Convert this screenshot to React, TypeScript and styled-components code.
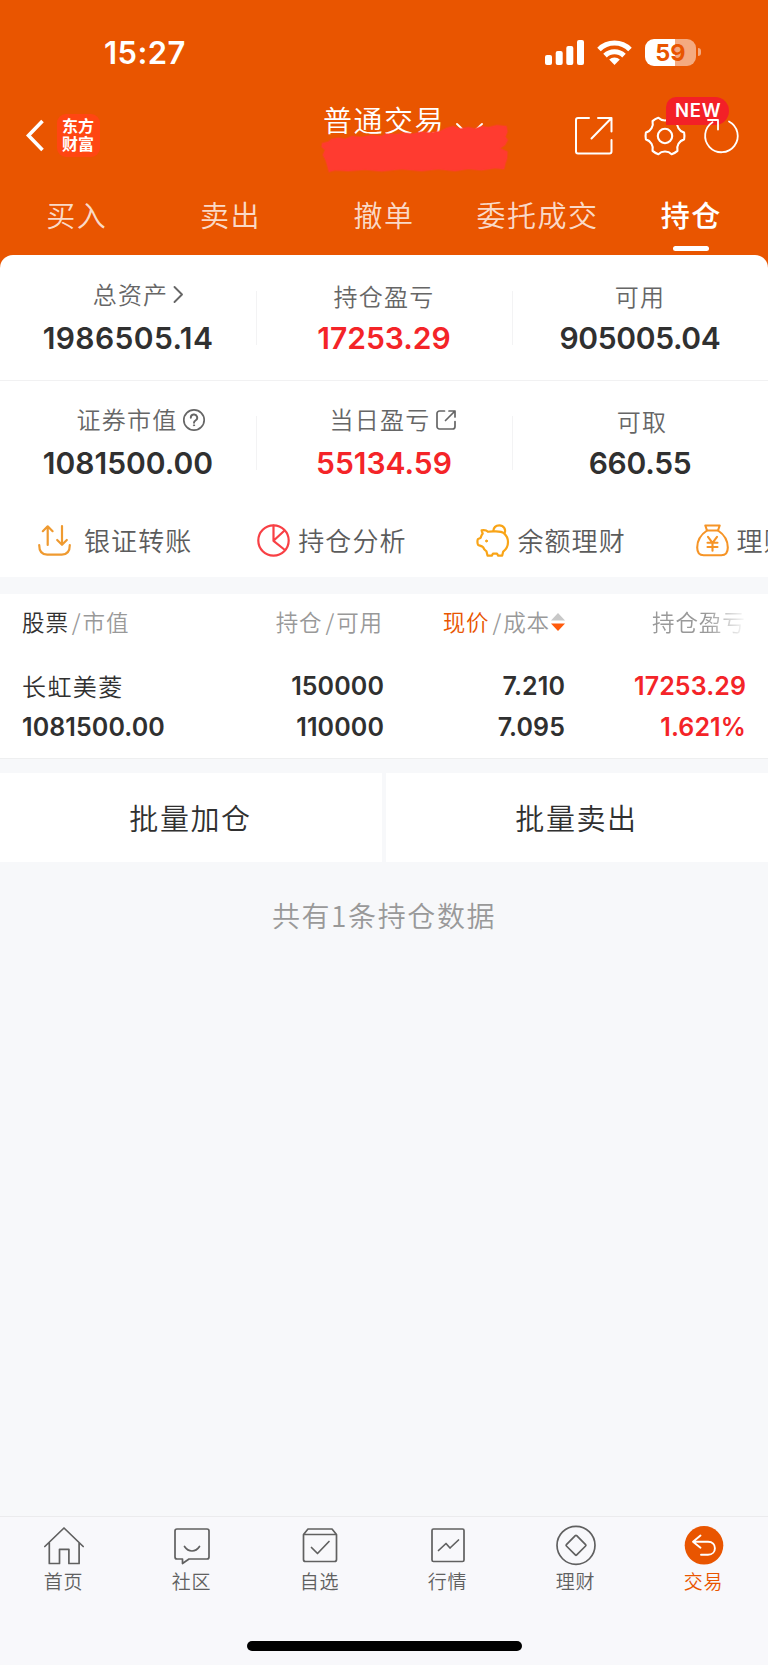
import React from "react";
import styled, { createGlobalStyle } from "styled-components";

const ORANGE = "#e95500";
const RED = "#f42428";
const INK = "#303030";
const GRAY = "#666666";
const MUTED = "#999999";
const BG = "#f7f8fa";
const CJK = `"Noto Sans CJK SC", sans-serif`;
const NUM = `Inter, "Noto Sans CJK SC", sans-serif`;

const GlobalStyle = createGlobalStyle`
  *, *::before, *::after { box-sizing: border-box; }
  body { margin: 0; background: ${BG}; font-family: ${CJK}; font-weight: 350; }
  svg { display: block; flex: none; overflow: visible; }
`;

const Screen = styled.div`
  display: flex;
  flex-direction: column;
  width: 768px;
  height: 1665px;
  overflow: hidden;
  background: ${BG};
`;

const Header = styled.header`
  flex: none;
  height: 268px;
  background: ${ORANGE};
  color: #fff;
`;

const StatusBar = styled.div`
  display: flex;
  align-items: center;
  justify-content: space-between;
  height: 96px;
  padding: 8px 67px 0 104px;
`;

const Clock = styled.span`
  font: 600 31px/32px ${NUM};
  letter-spacing: 0.4px;
  padding-top: 1px;
`;

const StatusIcons = styled.div`
  display: flex;
  align-items: center;
  gap: 13px;
`;

const Battery = styled.div`
  display: flex;
  align-items: center;
  gap: 2px;
`;

const BatteryBody = styled.div`
  display: flex;
  align-items: center;
  justify-content: center;
  width: 51px;
  height: 27px;
  border-radius: 9px;
  background: linear-gradient(90deg, #fff 59%, rgba(255, 255, 255, 0.5) 59%);
  color: ${ORANGE};
  font: 700 23.5px/27px ${NUM};
`;

const BatteryTip = styled.div`
  width: 3px;
  height: 8px;
  border-radius: 0 3px 3px 0;
  background: rgba(255, 255, 255, 0.5);
`;

const NavBar = styled.div`
  display: grid;
  grid-template-columns: 323px 190px 1fr;
  height: 80px;
`;

const NavLeft = styled.div`
  display: flex;
  align-items: center;
  gap: 14px;
  padding: 0 0 2px 25px;
`;

const AppLogo = styled.div`
  display: flex;
  flex-direction: column;
  align-items: center;
  justify-content: center;
  width: 43px;
  height: 43px;
  padding: 0 1px 2px 0;
  border-radius: 9px;
  background: #ff4612;
  font: 700 16px/18px ${CJK};
`;

const NavTitle = styled.div`
  position: relative;
  display: flex;
  align-items: flex-start;
  gap: 11px;
  padding-top: 5px;
`;

const TitleText = styled.span`
  font-size: 29px;
  line-height: 36px;
  letter-spacing: 1.5px;
`;

const TitleChevron = styled.svg`
  margin-top: 22px;
`;

const Scribble = styled.svg`
  position: absolute;
  left: -8px;
  top: -1px;
`;

const NavActions = styled.div`
  position: relative;
  display: flex;
  align-items: center;
  padding: 0 0 1px 61px;
`;

const GearWrap = styled.div`
  margin: 0 17px 0 32px;
`;

const Refresh = styled.svg`
  position: relative;
  z-index: 1;
`;

const NewBadge = styled.span`
  position: absolute;
  left: 153px;
  top: 1px;
  width: 63px;
  height: 28px;
  padding-left: 9px;
  border-radius: 10px 14px 14px 0;
  background: #f32027;
  font: 600 18.5px/27px ${NUM};
  letter-spacing: 0.7px;
`;

const Tabs = styled.nav`
  display: grid;
  grid-template-columns: repeat(5, 1fr);
  height: 79px;
`;

const Tab = styled.div<{ $active?: boolean }>`
  display: flex;
  flex-direction: column;
  align-items: center;
  padding-top: 17px;
  font-size: 29px;
  line-height: 42px;
  letter-spacing: 1.5px;
  font-weight: ${(p) => (p.$active ? 500 : 350)};
  color: ${(p) => (p.$active ? "#fff" : "rgba(255,255,255,0.8)")};

  &::after {
    content: "";
    width: 36px;
    height: 5px;
    margin-top: 11px;
    border-radius: 3px;
    background: ${(p) => (p.$active ? "#fff" : "transparent")};
  }
`;

const Summary = styled.section`
  flex: none;
  height: 322px;
  margin-top: -13px;
  border-radius: 13px 13px 0 0;
  background: #fff;
`;

const SummaryRow = styled.div`
  display: grid;
  grid-template-columns: repeat(3, 1fr);
  height: 125px;
  padding-top: 25px;

  & + & {
    padding-top: 24px;
    border-top: 1px solid #f1f1f2;
  }
`;

const Metric = styled.div`
  position: relative;
  display: flex;
  flex-direction: column;
  align-items: center;

  & + &::before {
    content: "";
    position: absolute;
    left: 0;
    top: 11px;
    width: 1px;
    height: 54px;
    background: #f3f3f4;
  }
`;

const MetricLabel = styled.div<{ $raised?: boolean; $indent?: number }>`
  display: flex;
  align-items: center;
  gap: 6px;
  height: 32px;
  margin-top: ${(p) => (p.$raised ? "-2px" : "0")};
  margin-bottom: ${(p) => (p.$raised ? "2px" : "0")};
  padding-left: ${(p) => p.$indent ?? 0}px;
  font-size: 24px;
  line-height: 32px;
  letter-spacing: 1.2px;
  color: ${GRAY};

  & > svg {
    margin-top: 1px;
  }
`;

const MetricValue = styled.div<{ $up?: boolean; $track?: number }>`
  margin-top: 8px;
  font: 600 30px/36px ${NUM};
  letter-spacing: ${(p) => p.$track ?? 0}px;
  color: ${(p) => (p.$up ? RED : INK)};
`;

const Tools = styled.div`
  display: flex;
  height: 72px;
  padding: 0 0 2px 38px;
  overflow: hidden;
`;

const Tool = styled.div<{ $gap?: number }>`
  display: flex;
  flex: none;
  align-items: center;
  width: 219.2px;
  font-size: 26px;
  line-height: 34px;
  letter-spacing: 1.1px;
  color: #5c5c5c;
  white-space: nowrap;

  & > span {
    padding-left: ${(p) => p.$gap ?? 8}px;
  }
`;

const Holdings = styled.section`
  flex: none;
  height: 165px;
  margin-top: 17px;
  padding: 0 22px;
  border-bottom: 1px solid #eeeff0;
  background: #fff;
`;

const HoldingsHead = styled.div`
  display: grid;
  grid-template-columns: 180px 181px 182px 181px;
  height: 60px;
  padding-bottom: 6px;
  font-size: 22.5px;
  letter-spacing: 0.9px;
  color: ${MUTED};
`;

const HeadCell = styled.div<{ $end?: boolean; $fade?: boolean }>`
  display: flex;
  align-items: center;
  justify-content: ${(p) => (p.$end ? "flex-end" : "flex-start")};
  white-space: nowrap;
  ${(p) =>
    p.$fade &&
    `padding-left: 87px;
     overflow: hidden;
     -webkit-mask-image: linear-gradient(90deg, #000 78%, rgba(0,0,0,0.12) 98%);
     mask-image: linear-gradient(90deg, #000 78%, rgba(0,0,0,0.12) 98%);`}
`;

const HeadStrong = styled.span<{ $accent?: boolean }>`
  color: ${(p) => (p.$accent ? ORANGE : INK)};
`;

const Slash = styled.span`
  margin: 0 1px 0 3px;
`;

const SortIcon = styled.svg`
  margin: 2px 0 0 1px;
`;

const HoldingRow = styled.div`
  display: grid;
  grid-template-columns: 180px 182px 181px 181px;
`;

const HoldingCell = styled.div<{ $end?: boolean; $up?: boolean }>`
  display: flex;
  flex-direction: column;
  align-items: ${(p) => (p.$end ? "flex-end" : "flex-start")};
  padding-top: 12px;
  font: 600 25px/41px ${NUM};
  letter-spacing: 0.1px;
  color: ${(p) => (p.$up ? RED : INK)};
`;

const StockName = styled.span`
  height: 41px;
  font: 350 24px/39px ${CJK};
  letter-spacing: 1.4px;
`;

const BatchBar = styled.div`
  display: grid;
  flex: none;
  grid-template-columns: 382px 1fr;
  gap: 4px;
  height: 89px;
  margin-top: 14px;
`;

const BatchButton = styled.button`
  padding: 0 1px 2px 0;
  border: 0;
  background: #fff;
  color: ${INK};
  font: 350 29px/42px ${CJK};
  letter-spacing: 1.6px;
`;

const CountNote = styled.p`
  flex: 1;
  margin: 0;
  padding-top: 32px;
  text-align: center;
  font-size: 28px;
  line-height: 42px;
  letter-spacing: 1.6px;
  color: ${MUTED};
`;

const BottomNav = styled.nav`
  display: grid;
  flex: none;
  grid-template-columns: repeat(6, 1fr);
  height: 125px;
  border-top: 1px solid #ebebed;
  background: #f8f8fb;
`;

const NavItem = styled.div<{ $active?: boolean }>`
  display: flex;
  flex-direction: column;
  align-items: center;
  gap: 2px;
  padding-top: 8px;
  font-size: 19px;
  line-height: 28px;
  letter-spacing: 0.8px;
  color: ${(p) => (p.$active ? ORANGE : "#606060")};

  & > span {
    padding-right: 1px;
  }
`;

const HomeIndicator = styled.div`
  flex: none;
  align-self: stretch;
  height: 24px;
  background: #f8f8fb;

  &::after {
    content: "";
    display: block;
    width: 275px;
    height: 10px;
    margin: 0 auto;
    border-radius: 5px;
    background: #000;
  }
`;

const gearPath = (() => {
  const at = (deg: number, r: number) => {
    const a = (deg * Math.PI) / 180;
    return `${(20 + r * Math.cos(a)).toFixed(2)} ${(20 + r * Math.sin(a)).toFixed(2)}`;
  };
  let d = `M${at(-10, 19.4)}`;
  for (let k = 0; k < 360; k += 60) {
    d += `Q${at(k, 19.8)} ${at(k + 10, 19.4)}C${at(k + 18, 15)} ${at(k + 42, 15)} ${at(k + 50, 19.4)}`;
  }
  return `${d}Z`;
})();

const scribblePath =
  "M22 145L40 140 50 132 70 128 90 132 110 124 140 126 170 121 200 123 215 116 240 118 270 114 295 116 320 110 345 113 375 109 395 99 415 94 435 101 460 97 480 101 500 94 520 97 545 91 574 94 577 110 571 125 578 135 570 150 556 160 577 170 576 190 571 205 567 222 540 220 500 226 460 222 420 228 370 223 320 228 260 223 200 229 150 224 100 228 60 226 42 230 38 215 32 195 24 180 30 165 20 155Z";

const stroke = (color: string, width: number) => ({
  fill: "none",
  stroke: color,
  strokeWidth: width,
  strokeLinecap: "round" as const,
  strokeLinejoin: "round" as const,
});

const tabs = ["买入", "卖出", "撤单", "委托成交", "持仓"];

const ChevronRight = () => (
  <svg width="9" height="17" {...stroke("#666", 1.9)}>
    <path d="M0.500 1l7.500 7.500L0.500 16" />
  </svg>
);

const HelpIcon = () => (
  <svg width="22" height="22" {...stroke("#666", 1.7)}>
    <circle cx="11" cy="11" r="10.200" />
    <path d="M7.800 8.700a3.200 3.200 0 1 1 4.700 2.800c-1 .6-1.500 1-1.500 2.200" strokeWidth="1.900" />
    <circle cx="11" cy="16.300" r=".6" fill="#666" strokeWidth="1" />
  </svg>
);

const OpenIcon = () => (
  <svg width="20" height="20" {...stroke("#666", 1.7)}>
    <path d="M8.500 1H3.500A2.500 2.500 0 0 0 1 3.500v13A2.500 2.500 0 0 0 3.500 19h13a2.500 2.500 0 0 0 2.500-2.500v-5" />
    <path d="M13 1h6v6M19 1L9.500 10.500" />
  </svg>
);

type MetricItem = {
  label: string;
  value: string;
  up?: boolean;
  icon?: React.ReactNode;
  indent?: number;
  track?: number;
};

const metrics: MetricItem[][] = [
  [
    { label: "总资产", value: "1986505.14", icon: <ChevronRight />, indent: 20, track: 0.4 },
    { label: "持仓盈亏", value: "17253.29", up: true },
    { label: "可用", value: "905005.04", track: -0.35 },
  ],
  [
    { label: "证券市值", value: "1081500.00", icon: <HelpIcon />, indent: 26 },
    { label: "当日盈亏", value: "55134.59", up: true, icon: <OpenIcon />, indent: 18 },
    { label: "可取", value: "660.55", indent: 4, track: -0.3 },
  ],
];

const tools = [
  {
    label: "银证转账",
    gap: 13,
    icon: (
      <svg width="33" height="33" {...stroke("#ef9a30", 2.2)}>
        <path d="M1.200 21c0 5.500 2.500 9.600 8 9.600h14.600c5.500 0 8-4.100 8-9.600" />
        <path d="M9.700 21V2.500M4.800 7.200l4.900-4.900 4.900 4.900M24 2v18.500M19.200 16l4.800 4.800 4.800-4.800" />
      </svg>
    ),
  },
  {
    label: "持仓分析",
    icon: (
      <svg width="33" height="33" {...stroke("#f84045", 2.2)}>
        <circle cx="16.500" cy="16.500" r="15.200" />
        <path d="M16.500 1.500v15.300l10.800 8.700M16.500 16.800L27 7" />
      </svg>
    ),
  },
  {
    label: "余额理财",
    icon: (
      <svg width="33" height="33" {...stroke("#f9a416", 2.2)}>
        <path d="M12 7.800C14 7.200 16 7.300 18.500 7.300c3.500 0 7-.3 9.500 2 2.700 2.300 4 5.400 4 8.700 0 4.500-2 7.500-4.800 9.600l-1 4h-4l-1.200-2h-4l-1.200 2h-4.300l-1-4.200c-1.600-1-2.800-2.600-3.500-4.400-1.500-1.200-4-1.500-4.900-2.200-.8-1-.9-4.600-.2-5.600 1-.7 2.300-.7 2.800-1.600.5-1.700.8-2.900 2-3.900L5.600 6.300C8 5.800 10.500 6.200 12 7.800z" />
        <path d="M17.300 7c.3-3.500 2.700-5.700 6-5.700 4.400 0 7 4 5.200 8" />
        <circle cx="10.500" cy="17" r="1" fill="#f9a416" strokeWidth="1" />
      </svg>
    ),
  },
  {
    label: "理财",
    icon: (
      <svg width="33" height="33" {...stroke("#f69426", 2.1)}>
        <path d="M9.300 1.500h14.400L22 6.500H11z" />
        <path d="M11 6.500C5 10.500 1.200 16.500 1.200 23.500c0 5.500 2 7.800 6.500 7.800h17.600c4.500 0 6.500-2.300 6.500-7.800 0-7-3.800-13-9.800-17" />
        <path d="M12 12.800l4.500 6 4.500-6M16.500 18.800v8M11.500 18.800h10M11.500 23h10" />
      </svg>
    ),
  },
];

const navIcon = stroke("#606060", 1.7);

const bottomItems = [
  {
    label: "首页",
    icon: (
      <svg width="40" height="40" {...navIcon}>
        <path d="M.8 21.500L20 3l19.200 18.500M5.300 18v20.500h10.200V24.300h9.400v14.200h10.200V18" />
      </svg>
    ),
  },
  {
    label: "社区",
    icon: (
      <svg width="40" height="40" {...navIcon}>
        <path d="M5 4h30a2 2 0 0 1 2 2v26a2 2 0 0 1-2 2H17l-6.500 4.500V34H5a2 2 0 0 1-2-2V6a2 2 0 0 1 2-2z" />
        <path d="M12.500 21.500c4 6 11 6 15 0" />
      </svg>
    ),
  },
  {
    label: "自选",
    icon: (
      <svg width="40" height="40" {...navIcon}>
        <path d="M3.500 9.500v25a2 2 0 0 0 2 2h29a2 2 0 0 0 2-2v-25zM3.500 9.500L8 4h24l4.500 5.500" />
        <path d="M11.500 22.500l6 6 11.500-12" />
      </svg>
    ),
  },
  {
    label: "行情",
    icon: (
      <svg width="40" height="40" {...navIcon}>
        <rect x="4" y="4" width="32" height="32.500" rx="1.500" />
        <path d="M10.500 25.500l7.500-7 4 4.500 8.500-8" />
      </svg>
    ),
  },
  {
    label: "理财",
    icon: (
      <svg width="40" height="40" {...navIcon}>
        <circle cx="20" cy="20.300" r="19" />
        <path d="M19.300 10.700L10.400 19.600a1 1 0 0 0 0 1.400l8.900 8.900a1 1 0 0 0 1.400 0l8.900-8.900a1 1 0 0 0 0-1.400l-8.900-8.900a1 1 0 0 0-1.400 0z" />
      </svg>
    ),
  },
  {
    label: "交易",
    active: true,
    icon: (
      <svg width="40" height="40" {...stroke("#fff", 1.9)}>
        <circle cx="20" cy="20.300" r="19.300" fill={ORANGE} stroke="none" />
        <path d="M16.500 10.500L9 16.700l7.500 6M9.500 16.700H24c9.200 0 9.200 13 0 13h-7" />
      </svg>
    ),
  },
];

export default function App() {
  return (
    <Screen>
      <GlobalStyle />
      <Header>
        <StatusBar>
          <Clock>15:27</Clock>
          <StatusIcons>
            <svg width="39" height="25" fill="#fff">
              <rect x="0" y="15" width="7" height="10" rx="2" />
              <rect x="10.700" y="11" width="7" height="14" rx="2" />
              <rect x="21.300" y="6" width="7" height="19" rx="2" />
              <rect x="32" y="0" width="7" height="25" rx="2" />
            </svg>
            <svg width="35" height="25" fill="none" stroke="#fff" strokeWidth="5">
              <path d="M2 9.500a22 22 0 0 1 31 0" />
              <path d="M8 15.600a13.500 13.500 0 0 1 19 0" />
              <path d="M17.500 25l-5.300-5.400a7.600 7.600 0 0 1 10.600 0z" fill="#fff" stroke="none" />
            </svg>
            <Battery>
              <BatteryBody>59</BatteryBody>
              <BatteryTip />
            </Battery>
          </StatusIcons>
        </StatusBar>
        <NavBar>
          <NavLeft>
            <svg width="18" height="31" fill="none" stroke="#fff" strokeWidth="3.600">
              <path d="M17.500 1L3.500 15.500 17.500 30" />
            </svg>
            <AppLogo>
              <span>东方</span>
              <span>财富</span>
            </AppLogo>
          </NavLeft>
          <NavTitle>
            <TitleText>普通交易</TitleText>
            <TitleChevron width="27" height="14" {...stroke("#fff", 1.9)}>
              <path d="M1 1l12.500 12L26 1" />
            </TitleChevron>
            <Scribble width="200" height="85" viewBox="0 0 600 255" fill="#ff3b30">
              <path
                d={scribblePath}
                stroke="#ff3b30"
                strokeOpacity="0.35"
                strokeWidth="6"
                strokeLinejoin="round"
              />
            </Scribble>
          </NavTitle>
          <NavActions>
            <svg width="39" height="39" {...stroke("#fff", 2)}>
              <path d="M15 2H4a2 2 0 0 0-2 2v31.500a2 2 0 0 0 2 2h31.500a2 2 0 0 0 2-2V24" />
              <path d="M24 2h13.500v13.500M37.500 2L17.500 22.500" />
            </svg>
            <GearWrap>
              <svg width="40" height="40" {...stroke("#fff", 2.1)}>
                <path d={gearPath} />
                <circle cx="20" cy="20" r="7.200" />
              </svg>
            </GearWrap>
            <NewBadge>NEW</NewBadge>
            <Refresh width="40" height="40" {...stroke("#fff", 1.8)}>
              <path d="M27 5.500A16.300 16.300 0 1 1 10.500 6.300" />
              <path d="M6 4h10v9.500" />
            </Refresh>
          </NavActions>
        </NavBar>
        <Tabs>
          {tabs.map((t) => (
            <Tab key={t} $active={t === "持仓"}>
              {t}
            </Tab>
          ))}
        </Tabs>
      </Header>

      <Summary>
        {metrics.map((row, i) => (
          <SummaryRow key={i}>
            {row.map((m) => (
              <Metric key={m.label}>
                <MetricLabel $raised={Boolean(m.icon)} $indent={m.indent}>
                  {m.label}
                  {m.icon}
                </MetricLabel>
                <MetricValue $up={m.up} $track={m.track}>
                  {m.value}
                </MetricValue>
              </Metric>
            ))}
          </SummaryRow>
        ))}
        <Tools>
          {tools.map((t) => (
            <Tool key={t.label} $gap={t.gap}>
              {t.icon}
              <span>{t.label}</span>
            </Tool>
          ))}
        </Tools>
      </Summary>

      <Holdings>
        <HoldingsHead>
          <HeadCell>
            <HeadStrong>股票</HeadStrong>
            <Slash>/</Slash>市值
          </HeadCell>
          <HeadCell $end>
            持仓<Slash>/</Slash>可用
          </HeadCell>
          <HeadCell $end>
            <HeadStrong $accent>现价</HeadStrong>
            <Slash>/</Slash>成本
            <SortIcon width="14" height="20">
              <path d="M0 8.500L7 1l7 7.500z" fill="#c8c8c8" />
              <path d="M0 11.500L7 19l7-7.500z" fill="#ff5a0c" />
            </SortIcon>
          </HeadCell>
          <HeadCell $fade>持仓盈亏</HeadCell>
        </HoldingsHead>
        <HoldingRow>
          <HoldingCell>
            <StockName>长虹美菱</StockName>
            <span>1081500.00</span>
          </HoldingCell>
          <HoldingCell $end>
            <span>150000</span>
            <span>110000</span>
          </HoldingCell>
          <HoldingCell $end>
            <span>7.210</span>
            <span>7.095</span>
          </HoldingCell>
          <HoldingCell $end $up>
            <span>17253.29</span>
            <span>1.621%</span>
          </HoldingCell>
        </HoldingRow>
      </Holdings>

      <BatchBar>
        <BatchButton>批量加仓</BatchButton>
        <BatchButton>批量卖出</BatchButton>
      </BatchBar>
      <CountNote>共有1条持仓数据</CountNote>

      <BottomNav>
        {bottomItems.map((b) => (
          <NavItem key={b.label} $active={b.active}>
            {b.icon}
            <span>{b.label}</span>
          </NavItem>
        ))}
      </BottomNav>
      <HomeIndicator />
    </Screen>
  );
}
